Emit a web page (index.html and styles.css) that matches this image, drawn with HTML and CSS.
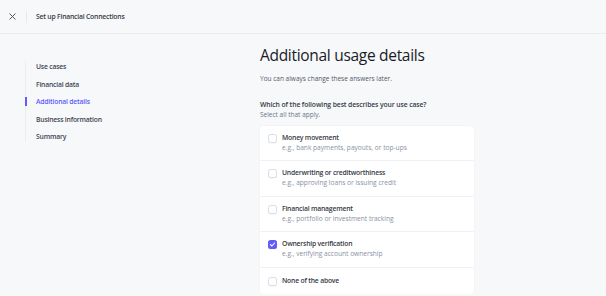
FILE: index.html
```html
<!DOCTYPE html>
<html lang="en">
<head>
    <meta charset="UTF-8">
    <meta name="viewport" content="width=device-width, initial-scale=1.0">
    <title>Set up Financial Connections</title>
    <link rel="stylesheet" href="styles.css">
</head>
<body>
    <!-- top bar -->
    <div class="topbar">
        <span class="close">
            <svg width="7" height="7" viewBox="0 0 7 7"><path d="M0.8 0.8 L6.2 6.2 M6.2 0.8 L0.8 6.2" stroke="#4f566b" stroke-width="1" stroke-linecap="round"/></svg>
        </span>
        <span class="divider"></span>
        <span class="topbar-title">Set up Financial Connections</span>
    </div>

    <div class="layout">
        <!-- steps -->
        <div class="steps">
            <div class="step">Use cases</div>
            <div class="step">Financial data</div>
            <div class="step active">Additional details</div>
            <div class="step">Business information</div>
            <div class="step">Summary</div>
        </div>

        <!-- form -->
        <div class="main">
            <h1>Additional usage details</h1>
            <p class="lead">You can always change these answers later.</p>
            <div class="question">Which of the following best describes your use case?</div>
            <div class="hint">Select all that apply.</div>

            <div class="card">
                <div class="option">
                    <span class="box"></span>
                    <div class="option-text">
                        <div class="option-title">Money movement</div>
                        <div class="option-desc">e.g., bank payments, payouts, or top-ups</div>
                    </div>
                </div>
                <div class="option">
                    <span class="box"></span>
                    <div class="option-text">
                        <div class="option-title">Underwriting or creditworthiness</div>
                        <div class="option-desc">e.g., approving loans or issuing credit</div>
                    </div>
                </div>
                <div class="option">
                    <span class="box"></span>
                    <div class="option-text">
                        <div class="option-title">Financial management</div>
                        <div class="option-desc">e.g., portfolio or investment tracking</div>
                    </div>
                </div>
                <div class="option">
                    <span class="box checked">
                        <svg width="9" height="9" viewBox="0 0 9 9"><path d="M2.4 4.6 L3.9 6 L6.6 3" fill="none" stroke="#fff" stroke-width="1.1" stroke-linecap="round" stroke-linejoin="round"/></svg>
                    </span>
                    <div class="option-text">
                        <div class="option-title">Ownership verification</div>
                        <div class="option-desc">e.g., verifying account ownership</div>
                    </div>
                </div>
                <div class="option single">
                    <span class="box"></span>
                    <div class="option-text">
                        <div class="option-title">None of the above</div>
                    </div>
                </div>
            </div>
        </div>
    </div>
</body>
</html>
```

FILE: styles.css
```css
/* global */
body, html {
    margin: 0;
    padding: 0;
    background-color: #f6f8fa;
    font-family: 'Open Sans', 'Liberation Sans', sans-serif;
    color: #353a44;
    overflow: hidden;
}

/* top bar */
.topbar {
    height: 33px;
    display: flex;
    align-items: center;
    padding-left: 9px;
    border-bottom: 1px solid #ebeef1;
}

.close {
    display: flex;
    width: 7px;
    height: 7px;
}

.divider {
    width: 1px;
    height: 12px;
    background: #e3e8ee;
    margin-left: 10px;
}

.topbar-title {
    margin-left: 9px;
    font-size: 6.8px;
    font-weight: 600;
    letter-spacing: -0.2px;
    color: #353a44;
}

/* layout */
.layout {
    display: flex;
    padding-left: 25px;
}

/* left steps */
.steps {
    width: 120px;
    margin-top: 27px;
    align-self: flex-start;
    border-left: 1px solid #ebeef1;
    display: flex;
    flex-direction: column;
    gap: 8.5px;
    padding: 1px 0;
}

.step {
    position: relative;
    padding-left: 10px;
    font-size: 6.8px;
    line-height: 9px;
    font-weight: 600;
    letter-spacing: -0.2px;
    color: #414552;
}

.step.active {
    color: #625afa;
}

.step.active::before {
    content: "";
    position: absolute;
    left: -1px;
    top: 0;
    width: 2px;
    height: 9px;
    background: #625afa;
}

/* main column */
.main {
    margin-left: 114px;
    width: 214px;
}

.main h1 {
    margin: 10px 0 0;
    font-size: 15.5px;
    line-height: 22px;
    font-weight: 400;
    letter-spacing: -0.3px;
    color: #1a1b25;
}

.lead {
    margin: 8px 0 0;
    font-size: 6.5px;
    line-height: 10px;
    color: #545969;
}

.question {
    margin-top: 16px;
    font-size: 6.8px;
    line-height: 10px;
    font-weight: 600;
    letter-spacing: -0.1px;
    color: #353a44;
}

.hint {
    font-size: 6.5px;
    line-height: 10px;
    color: #6c7688;
}

/* options card */
.card {
    margin-top: 6px;
    background: #fff;
    border-radius: 4px;
    box-shadow: 0 0 0 0.5px rgba(0, 0, 0, 0.03);
}

.option {
    display: flex;
    align-items: flex-start;
    padding: 7px 8px 7.4px;
    border-bottom: 1px solid #f0f2f5;
}

.option:last-child {
    border-bottom: none;
}

.option.single {
    padding-top: 8px;
    padding-bottom: 8px;
}

.box {
    flex: none;
    width: 7px;
    height: 7px;
    margin-top: 1px;
    border: 1px solid #d8dee4;
    border-radius: 2.5px;
    background: #fff;
    box-shadow: 0 0.5px 1px rgba(0, 0, 0, 0.06);
    display: flex;
}

.box.checked {
    width: 9px;
    height: 9px;
    border: none;
    background: #625afa;
}

.option-text {
    margin-left: 5px;
}

.option-title {
    font-size: 6.8px;
    line-height: 10px;
    font-weight: 600;
    letter-spacing: -0.2px;
    color: #353a44;
}

.option-desc {
    font-size: 6.6px;
    line-height: 10px;
    color: #8792a2;
}
```
